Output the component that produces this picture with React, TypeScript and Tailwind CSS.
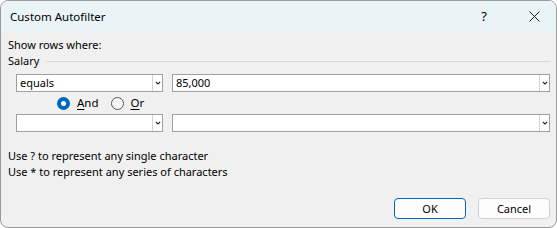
import React from "react";

const Chevron = () => (
  <svg width="6" height="4" viewBox="0 0 6 4" className="text-[#222]">
    <path d="M0.8 0.8 L3 3 L5.2 0.8" fill="none" stroke="currentColor" strokeWidth="1.1" />
  </svg>
);

const Combo: React.FC<{ value?: string; width: string }> = ({ value, width }) => (
  <div className={`${width} h-[18px] flex bg-white border border-[#a0a0a0]`}>
    <div className="flex-1 px-[3px] text-[11px] leading-[16px] text-black">{value}</div>
    <div className="w-[10px] border-l border-[#d4d4d4] flex items-center justify-center">
      <Chevron />
    </div>
  </div>
);

const Radio: React.FC<{ checked?: boolean; label: string }> = ({ checked, label }) => (
  <div className="flex items-center gap-[7px]">
    {checked ? (
      <div className="w-[13px] h-[13px] rounded-full bg-[#0067c0] flex items-center justify-center">
        <div className="w-[5px] h-[5px] rounded-full bg-white" />
      </div>
    ) : (
      <div className="w-[13px] h-[13px] rounded-full border border-[#555] bg-[#f7f7f7]" />
    )}
    <span className="text-[11.5px] leading-[16px]">
      <span className="underline underline-offset-2">{label[0]}</span>
      {label.slice(1)}
    </span>
  </div>
);

export default function App() {
  return (
    <div
      className="w-[557px] h-[228px] bg-white text-black text-[11px]"
      style={{ fontFamily: '"Noto Sans", "Liberation Sans", sans-serif' }}
    >
      <div className="w-full h-full rounded-[8px] border border-[#9a9a9a] overflow-hidden flex flex-col bg-[#f0f0f0]">
        {/* title bar */}
        <div className="h-[31px] shrink-0 bg-[#eaf4f7] flex items-center pl-[9px] pr-[16px]">
          <span className="text-[11.5px] leading-[16px] flex-1">Custom Autofilter</span>
          <span className="text-[13px] w-[14px] text-center mr-[38px]">?</span>
          <svg width="11" height="11" viewBox="0 0 11 11">
            <path d="M0.5 0.5 L10.5 10.5 M10.5 0.5 L0.5 10.5" stroke="#1a1a1a" strokeWidth="1" />
          </svg>
        </div>

        {/* body */}
        <div className="flex-1 flex flex-col pl-[7px] pr-[6px] pt-[5px] pb-[8px]">
          <div className="leading-[16px]">Show rows where:</div>
          <div className="flex items-center gap-[7px]">
            <span className="leading-[16px]">Salary</span>
            <div className="flex-1 h-px bg-[#d8d8d8]" />
          </div>

          <div className="flex gap-[9px] mt-[5px] pl-[8px]">
            <Combo value="equals" width="w-[147px]" />
            <Combo value="85,000" width="w-[378px]" />
          </div>

          <div className="flex items-center gap-[12px] h-[22px] pl-[49px]">
            <Radio checked label="And" />
            <Radio label="Or" />
          </div>

          <div className="flex gap-[9px] pl-[8px]">
            <Combo width="w-[147px]" />
            <Combo width="w-[378px]" />
          </div>

          <div className="mt-[16px] leading-[16px]">Use ? to represent any single character</div>
          <div className="leading-[16px]">Use * to represent any series of characters</div>

          <div className="mt-auto flex justify-end gap-[12px]">
            <button className="w-[72px] h-[21px] rounded-[4px] bg-[#fdfdfd] border border-[#0067c0] text-[11px] leading-[16px]">
              OK
            </button>
            <button className="w-[72px] h-[21px] rounded-[4px] bg-[#fdfdfd] border border-[#d0d0d0] text-[11px] leading-[16px]">
              Cancel
            </button>
          </div>
        </div>
      </div>
    </div>
  );
}
